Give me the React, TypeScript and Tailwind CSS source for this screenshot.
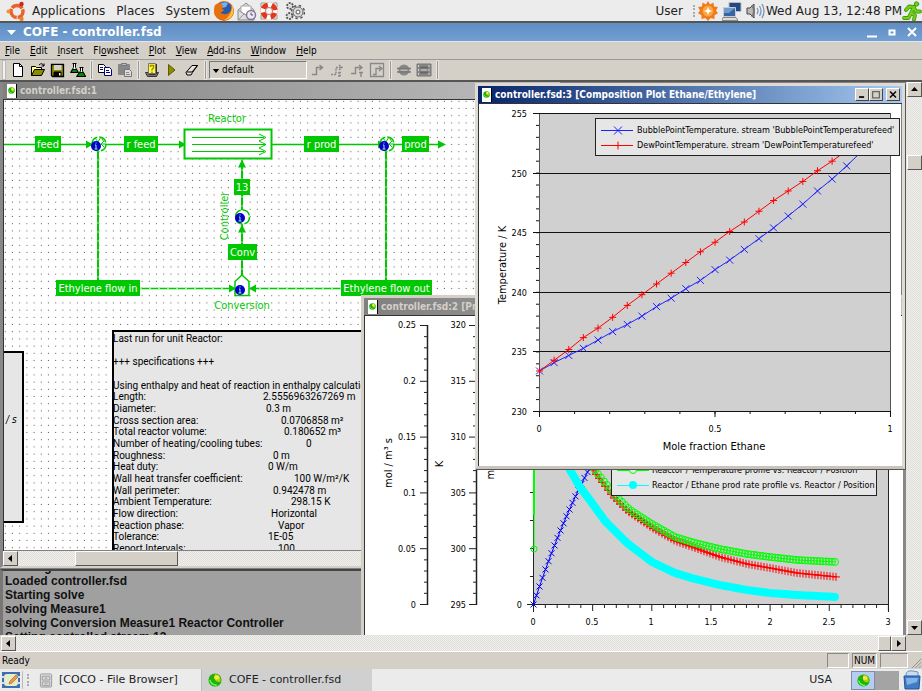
import type { ReactNode } from "react";

type Point = [number, number];

const MENUS: { label: string; key: number }[] = [
  { label: "File", key: 0 },
  { label: "Edit", key: 0 },
  { label: "Insert", key: 0 },
  { label: "Flowsheet", key: 2 },
  { label: "Plot", key: 0 },
  { label: "View", key: 0 },
  { label: "Add-ins", key: 0 },
  { label: "Window", key: 0 },
  { label: "Help", key: 0 },
];

const LOG_LINES = [
  "Loading controller.fsd",
  "Loaded controller.fsd",
  "Starting solve",
  "solving Measure1",
  "solving Conversion Measure1 Reactor Controller",
  "Setting controlled stream 13",
];

// label, value and the tab stop the value starts at
const REPORT: [string, string, number][] = [
  ["Last run for unit Reactor:", "", 0],
  ["", "", 0],
  ["+++ specifications +++", "", 0],
  ["", "", 0],
  ["Using enthalpy and heat of reaction in enthalpy calculations", "", 0],
  ["Length:", "2.5556963267269 m", 259],
  ["Diameter:", "0.3 m", 262],
  ["Cross section area:", "0.0706858 m²", 277],
  ["Total reactor volume:", "0.180652 m³", 280],
  ["Number of heating/cooling tubes:", "0", 302],
  ["Roughness:", "0 m", 269],
  ["Heat duty:", "0 W/m", 264],
  ["Wall heat transfer coefficient:", "100 W/m²/K", 290],
  ["Wall perimeter:", "0.942478 m", 269],
  ["Ambient Temperature:", "298.15 K", 287],
  ["Flow direction:", "Horizontal", 267],
  ["Reaction phase:", "Vapor", 274],
  ["Tolerance:", "1E-05", 264],
  ["Report Intervals:", "100", 274],
];

const DEW = [
  233.4, 234.3, 235.2, 236.2, 237, 237.9, 238.9, 239.8, 240.7, 241.6, 242.5,
  243.4, 244.2, 245.1, 245.9, 246.8, 247.7, 248.5, 249.3, 250.2, 251, 251.9,
];
const BUBBLE = [
  233.4, 234.1, 234.7, 235.3, 236, 236.7, 237.3, 238, 238.8, 239.5, 240.3, 241,
  241.9, 242.7, 243.6, 244.5, 245.4, 246.4, 247.4, 248.5, 249.5, 250.6, 251.8,
];

const RED_PROFILE: Point[] = [
  [222, 145], [230, 157], [248, 181], [262, 195], [287, 212], [310, 225], [330, 232],
  [355, 241], [382, 248], [405, 252], [432, 257], [472, 261],
];
const GREEN_PROFILE: Point[] = [
  [224, 145], [232, 157], [252, 181], [265, 194], [287, 208], [310, 221], [330, 227],
  [355, 233], [382, 238], [405, 241], [432, 244], [472, 246],
];
const CYAN_PROFILE: Point[] = [
  [200, 145], [205, 154], [215, 171], [227, 187], [240, 205], [262, 227], [287, 246],
  [310, 257], [330, 263], [355, 269], [382, 274], [405, 277], [432, 279], [472, 281],
];

function resample(points: Point[], step: number): Point[] {
  const out: Point[] = [];
  const last = points[points.length - 1][0];
  for (let x = points[0][0]; x <= last; x += step) {
    const i = Math.max(1, points.findIndex((p) => p[0] >= x));
    const [x0, y0] = points[i - 1];
    const [x1, y1] = points[i];
    out.push([x, y0 + ((y1 - y0) * (x - x0)) / (x1 - x0)]);
  }
  return out;
}

const toPath = (points: Point[]) => "M" + points.map((p) => p.join(" ")).join("L");

const plus = (points: Point[], r: number) =>
  points.map(([x, y]) => `M${x - r} ${y}h${2 * r}M${x} ${y - r}v${2 * r}`).join("");

const cross = (points: Point[], r: number) =>
  points
    .map(([x, y]) => `M${x - r} ${y - r}l${2 * r} ${2 * r}M${x - r} ${y + r}l${2 * r} ${-2 * r}`)
    .join("");

const ticks = (count: number) => Array.from({ length: count }, (_, i) => i);

/* ---------- window furniture ---------- */

function Orb({ className }: { className?: string }) {
  return (
    <svg viewBox="0 0 16 16" className={className} aria-hidden="true">
      <circle cx="8" cy="8" r="7.5" fill="#22b00c" />
      <path d="M8 1a7 7 0 0 1 6 9q-4 1-6-2-1-4 0-7z" fill="#a8d800" />
      <ellipse cx="10" cy="5" rx="3" ry="2.5" fill="#ffe63c" />
      <path d="M2 8q2 6 8 6" stroke="#6f6" strokeWidth="1.5" fill="none" />
    </svg>
  );
}

function DocIcon() {
  return (
    <span className="flex h-[14px] w-[10px] shrink-0 items-center justify-center border-r border-black bg-white">
      <Orb className="h-[7px] w-[7px]" />
    </span>
  );
}

function ScrollArrow({ dir, label }: { dir: "up" | "down" | "left" | "right"; label: string }) {
  const shapes = {
    up: "M4 9h7L7.5 5z",
    down: "M4 6h7L7.5 10z",
    left: "M9 4v7L5 7.5z",
    right: "M6 4v7l4-3.500z",
  };
  return (
    <button
      aria-label={label}
      className="h-[15px] w-[15px] shrink-0 border border-t-white border-l-white border-r-[#555] border-b-[#555] bg-[#d4d0c8]"
    >
      <svg viewBox="1 1 13 13" className="block h-full w-full" aria-hidden="true">
        <path d={shapes[dir]} fill="#000" />
      </svg>
    </button>
  );
}

const TRACK =
  "bg-[repeating-conic-gradient(#f1f0ee_0_25%,#dfddd8_0_50%)] bg-[length:2px_2px]";
const THUMB =
  "border border-t-white border-l-white border-r-[#555] border-b-[#555] bg-[#d4d0c8]";

function Caption({ title, active }: { title: string; active?: boolean }) {
  return (
    <div
      className={
        "flex h-[17px] shrink-0 items-center gap-[3px] pl-[4px] pr-[2px] font-['DejaVu_Sans_Condensed','Noto_Sans',sans-serif] text-[10px] font-bold " +
        (active
          ? "bg-linear-to-r from-[#0a246a] to-[#a6caf0] text-white"
          : "bg-linear-to-r from-[#808080] to-[#c0c0c0] text-[#d4d0c8]")
      }
    >
      <DocIcon />
      <span className="flex-1 overflow-hidden whitespace-nowrap">{title}</span>
      {active && (
        <span className="flex">
          <CaptionButton label="Minimize">
            <path d="M3 9.500h6" strokeWidth="2" />
          </CaptionButton>
          <CaptionButton label="Maximize">
            <path d="M2.500 3v7.500h8V3M2 3h9" strokeWidth="1.500" stroke="#666" />
          </CaptionButton>
          <span className="w-[3px]" />
          <CaptionButton label="Close">
            <path d="M3 3l7 7M10 3l-7 7" strokeWidth="1.700" />
          </CaptionButton>
        </span>
      )}
    </div>
  );
}

function CaptionButton({ label, children }: { label: string; children: ReactNode }) {
  return (
    <button
      aria-label={label}
      className="h-[13px] w-[14px] border border-t-white border-l-white border-r-[#444] border-b-[#444] bg-[#d4d0c8]"
    >
      <svg viewBox="0 0 13 13" className="block h-full w-full" fill="none" stroke="#000" aria-hidden="true">
        {children}
      </svg>
    </button>
  );
}

/* ---------- flowsheet ---------- */

const GREEN = "#00c800";

function StreamLabel({ x, y, w, text }: { x: number; y: number; w: number; text: string }) {
  return (
    <g>
      <rect x={x} y={y} width={w} height="16" fill={GREEN} />
      <text x={x + w / 2} y={y + 12} textAnchor="middle" fill="#fff">
        {text}
      </text>
    </g>
  );
}

function Info({ x, y }: { x: number; y: number }) {
  return (
    <g>
      <circle cx={x} cy={y} r="5" fill="#00c" />
      <path d={`M${x - 1} ${y - 1}h1v4M${x - 1.5} ${y + 3}h3M${x - 0.5} ${y - 3}h1`} stroke="#9cf0b0" fill="none" />
    </g>
  );
}

function Splitter({ x }: { x: number }) {
  return (
    <g>
      <circle cx={x + 1} cy="44" r="7" fill="#fff" stroke={GREEN} strokeWidth="1.500" strokeDasharray="9 2" />
      <path d={`M${x - 3} 38l3 4 3-5 3 5M${x + 8} 44h-5l3-3m-3 3l3 3`} stroke={GREEN} fill="none" />
      <Info x={x - 2} y={46} />
    </g>
  );
}

function Flowsheet() {
  return (
    <svg
      width="600"
      height="450"
      className="block font-['DejaVu_Sans_Condensed','Noto_Sans',sans-serif] text-[11px]"
      aria-label="Flowsheet"
    >
      <defs>
        <pattern id="grid" x="4.500" y="4.500" width="7.200" height="7.200" patternUnits="userSpaceOnUse">
          <rect x="3.500" y="3.500" width="1" height="1" fill="#555" />
        </pattern>
      </defs>
      <rect width="600" height="450" fill="#fff" />
      <rect width="600" height="450" fill="url(#grid)" />

      <g stroke={GREEN} strokeWidth="2" fill="none">
        <path d="M0 44.500H180M267 44.500H436" strokeWidth="1.500" />
        <path d="M94 50V188M382 50V188M238 60V182" />
        <path d="M94 50V188M382 50V188M238 60V182" stroke="#fff" strokeWidth="1" strokeDasharray="2 7" opacity=".6" />
        <path d="M136 188.500H230M246 188.500H340" strokeWidth="1.500" />
        <path d="M136 188.500H230M246 188.500H340" stroke="#fff" strokeWidth="1" strokeDasharray="2 7" opacity=".6" />
      </g>
      <path
        d="M82 40.500v8l7-4zM175 40.500v8l7-4zM374 40.500v8l7-4zM434 40.500v8l8-4zM234 67.500h8l-4-8zM234 132.500h8l-4-8zM225 184.500v8l7-4zM252 184.500v8l-7-4z"
        fill={GREEN}
      />
      <rect x="180.500" y="29.500" width="87" height="29" fill="#fff" stroke={GREEN} strokeWidth="2" />
      <path
        d="M188 37.500h72M188 44.500h74M188 51.500h72M255 34l7 3.500-7 3.500 7 3.500-7 3.500 7 3.500-7 3.500"
        stroke={GREEN}
        fill="none"
      />
      <Splitter x={94} />
      <Splitter x={382} />
      <circle cx="238.500" cy="117" r="7" fill="#fff" stroke={GREEN} strokeWidth="1.500" strokeDasharray="9 2" />
      <Info x={236} y={118} />
      <path d="M231 195.500V181.500l7-6.500 7 6.500v14z" fill="#fff" stroke={GREEN} strokeWidth="1.500" />
      <Info x={236} y={190} />

      <StreamLabel x={31} y={36} w={26} text="feed" />
      <StreamLabel x={120} y={36} w={34} text="r feed" />
      <StreamLabel x={300} y={36} w={35} text="r prod" />
      <StreamLabel x={398} y={36} w={27} text="prod" />
      <StreamLabel x={230} y={79} w={16} text="13" />
      <StreamLabel x={224} y={144} w={29} text="Conv" />
      <StreamLabel x={52} y={180} w={84} text="Ethylene flow in" />
      <StreamLabel x={337} y={180} w={91} text="Ethylene flow out" />
      <g fill={GREEN} textAnchor="middle">
        <text x="223" y="22">Reactor</text>
        <text x="238" y="209">Conversion</text>
        <text transform="translate(224 116) rotate(-90)">Controller</text>
      </g>

      <rect x="-5" y="252" width="24" height="170" fill="#e6e6e6" stroke="#000" strokeWidth="2" />
      <text x="2" y="323" className="text-[10px] italic">/ s</text>

      <rect x="109" y="231" width="480" height="400" fill="#e6e6e6" stroke="#000" strokeWidth="2" />
      <g className="font-['Roboto','Noto_Sans',sans-serif] text-[10px]">
        {REPORT.map(([label, value, x], i) => {
          const y = 242 + Math.round((i * 35) / 3);
          return (
            <g key={i}>
              <text x="109" y={y}>{label}</text>
              <text x={x} y={y}>{value}</text>
            </g>
          );
        })}
      </g>
    </svg>
  );
}

/* ---------- plots ---------- */

function ProfilePlot() {
  const blue: Point[] = ticks(20).map((i) => [
    168.5 + i * 3,
    288.5 - 350 * (1 - Math.exp(-0.0088 * i * 3)),
  ]);
  const red = resample(RED_PROFILE, 3);
  const green = resample(GREEN_PROFILE, 3);
  const cyan = resample(CYAN_PROFILE, 3);
  return (
    <svg
      width="536"
      height="320"
      className="block font-['DejaVu_Sans_Condensed','Noto_Sans',sans-serif] text-[9px]"
      aria-label="Reactor profiles"
    >
      <rect width="536" height="320" fill="#fff" />
      <rect x="168" y="9" width="355" height="280" fill="#d0d0d0" />
      <g stroke="#222">
        {[62, 111].map((x) => (
          <g key={x}>
            <path d={`M${x}.500 9v280`} strokeWidth="1.500" />
            {ticks(26).map((i) => (
              <path key={i} d={`M${x} ${9.5 + i * 11.16}h${i % 5 === 0 ? -7 : -3}`} />
            ))}
          </g>
        ))}
        <path d="M168.500 9v287M523.500 9v287M162 288.500h362" />
        {ticks(11).map((i) => (
          <path key={i} d={`M168 ${8.5 + i * 28}h-3`} />
        ))}
        {ticks(31).map((i) => (
          <path key={i} d={`M${168.5 + i * 11.83} 289v${i % 5 === 0 ? 6 : 3}`} />
        ))}
      </g>
      <g textAnchor="end">
        {["0.25", "0.2", "0.15", "0.1", "0.05", "0"].map((t, i) => (
          <text key={t} x="51" y={12 + i * 56}>{t}</text>
        ))}
        {["320", "315", "310", "305", "300", "295"].map((t, i) => (
          <text key={t} x="101" y={12 + i * 56}>{t}</text>
        ))}
        <text x="157" y="292">0</text>
      </g>
      <g textAnchor="middle">
        {["0", "0.5", "1", "1.5", "2", "2.5", "3"].map((t, i) => (
          <text key={t} x={168 + Math.round(i * 59.2)} y="309">{t}</text>
        ))}
        <g className="text-[11px]">
          <text transform="translate(27 147) rotate(-90)">mol / m³ s</text>
          <text transform="translate(78 148) rotate(-90)">K</text>
          <text transform="translate(129 147) rotate(-90)">mol / s</text>
        </g>
      </g>
      <g fill="none">
        <path d="M169 9V199" stroke="#0f0" strokeWidth="2" />
        <path d="M169 199V233" stroke="#0f0" />
        <circle cx="169" cy="233" r="3" stroke="#0f0" />
        <path d={toPath(blue) + cross(blue, 3)} stroke="#00f" />
        <path d={toPath(green)} stroke="#0f0" />
        <path d={toPath(red) + plus(red, 4)} stroke="#f00" />
        {green.map(([x, y]) => (
          <circle key={x} cx={x} cy={y} r="3.500" stroke="#0f0" />
        ))}
        <path d={toPath(cyan)} stroke="#0ff" strokeWidth="8" strokeLinecap="round" strokeLinejoin="round" />
      </g>
      <rect x="246.500" y="100.500" width="265" height="79" fill="#e6e6e6" stroke="#222" />
      <path d="M252 154.500h32" stroke="#0f0" />
      <circle cx="268" cy="154" r="3.500" fill="#e6e6e6" stroke="#0f0" />
      <path d="M252 169.500h32" stroke="#0ff" />
      <circle cx="268" cy="169" r="4" fill="#0ff" />
      <text x="287" y="157">Reactor / Temperature profile vs. Reactor / Position</text>
      <text x="287" y="172">Reactor / Ethane prod rate profile vs. Reactor / Position</text>
    </svg>
  );
}

function CompositionPlot() {
  const place = (values: number[]): Point[] =>
    values.map((t, i) => [60.5 + i * 14.63, 307.5 - (t - 230) * 11.92]);
  const dew = place(DEW);
  const bubble = place(BUBBLE);
  return (
    <svg
      width="422"
      height="362"
      className="block font-['DejaVu_Sans_Condensed','Noto_Sans',sans-serif] text-[9px]"
      aria-label="Composition plot"
    >
      <rect width="422" height="362" fill="#fff" />
      <rect x="60.500" y="9.500" width="351" height="298" fill="#d0d0d0" stroke="#555" />
      <g stroke="#111">
        {ticks(6).map((i) => (
          <path key={i} d={`M54 ${Math.round(9 + i * 59.6)}.500H411`} />
        ))}
        {ticks(26).map((i) => (
          <path key={i} d={`M60 ${9.5 + i * 11.92}h-3`} />
        ))}
        <path d="M60.500 307v6M236 307v6M411.500 307v6" />
        {ticks(11).map((i) => (
          <path key={i} d={`M${60.5 + i * 35.1} 307v3`} />
        ))}
      </g>
      <g textAnchor="end">
        {["255", "250", "245", "240", "235", "230"].map((t, i) => (
          <text key={t} x="48" y={Math.round(13 + i * 59.6)}>{t}</text>
        ))}
      </g>
      <g textAnchor="middle">
        <text x="60" y="328">0</text>
        <text x="236" y="328">0.5</text>
        <text x="411" y="328">1</text>
        <g className="text-[11px]">
          <text x="235" y="346">Mole fraction Ethane</text>
          <text transform="translate(27 161) rotate(-90)">Temperature / K</text>
        </g>
      </g>
      <g fill="none">
        <path d={toPath([...bubble, [397, 36]]) + cross(bubble, 3.5)} stroke="#22f" />
        <path d={toPath([...dew, [382, 38]]) + plus(dew, 3.5)} stroke="#f00" />
      </g>
      <rect x="116.500" y="14.500" width="304" height="37" fill="#e6e6e6" stroke="#222" />
      <path d={"M122 26.500h32" + cross([[139, 26.5]], 4)} stroke="#22f" />
      <path d={"M122 41.500h32" + plus([[139, 41.5]], 4)} stroke="#f00" />
      <text x="158" y="29">BubblePointTemperature. stream 'BubblePointTemperaturefeed'</text>
      <text x="158" y="44">DewPointTemperature. stream 'DewPointTemperaturefeed'</text>
    </svg>
  );
}

/* ---------- toolbar ---------- */

function ToolButton({ label, disabled, children }: { label: string; disabled?: boolean; children: ReactNode }) {
  return (
    <button aria-label={label} disabled={disabled} className="flex w-5 shrink-0 items-center justify-center">
      <svg viewBox="0 0 16 16" className="h-4 w-4" fill="none" stroke="#000" aria-hidden="true">
        {children}
      </svg>
    </button>
  );
}

function Separator() {
  return <span className="mx-[3px] h-[18px] w-px shrink-0 bg-[#999] outline outline-[#e8e6e0]" />;
}

function ToolBar() {
  return (
    <div className="flex h-[21px] shrink-0 items-center border-t border-[#999] bg-[#d4d0c8] pl-[3px]">
      <span className="mr-[3px] h-[18px] w-[2px] bg-[#f4f2ee] outline outline-[#bbb]" />
      <ToolButton label="New">
        <path d="M3.500 1.500h6l3 3v10h-9z" fill="#fff" />
        <path d="M9.500 1.500v3h3" />
      </ToolButton>
      <ToolButton label="Open">
        <path d="M1.500 13.500v-9h4l1 1h5v2" fill="#ffff80" />
        <path d="M1.500 13.500l3-6h10l-3 6z" fill="#8c8c00" />
        <path d="M9 3q3-3 5 1m0-2.500V4h-2.500" />
      </ToolButton>
      <ToolButton label="Save">
        <path d="M1.500 2.500h12v12h-11l-1-1z" fill="#8c8c00" strokeWidth="1.300" />
        <path d="M4 3h7.500v5H4z" fill="#d4d0c8" stroke="none" />
        <path d="M4 10h7v4H4z" fill="#000" />
        <path d="M9 11h1.500v2.500H9z" fill="#fff" stroke="none" />
      </ToolButton>
      <ToolButton label="Flasks">
        <path d="M2.500 1.500h4M3.500 1.500v4l-3 5h8l-3-5v-4" fill="#fff" />
        <path d="M2.500 7.500h4l1.500 3H1z" fill="#080" />
        <path d="M9.500 5.500h4M10.500 6v3l-4 5.500h9L12.500 9V6" fill="#fff" />
        <path d="M9.500 10.500h4l2 4H7z" fill="#080" />
      </ToolButton>
      <Separator />
      <ToolButton label="Copy">
        <path d="M1.500 2.500h5l2 2v6h-7z" fill="#fff" />
        <path d="M7.500 5.500h5l2 2v6h-7z" fill="#fff" stroke="#000080" />
        <path d="M3 5.500h3M3 7.500h3M9 8.500h3M9 10.500h4" stroke="#000080" />
      </ToolButton>
      <ToolButton label="Paste" disabled>
        <path d="M1.500 2.500h11v10h-11z" fill="#888" stroke="#888" />
        <path d="M4.500 1.500h5v2h-5z" fill="#bbb" stroke="#777" />
        <path d="M7.500 7.500h5l2 2v5h-7z" fill="#ddd" stroke="#777" />
        <path d="M9 10.500h3M9 12.500h4" stroke="#888" />
      </ToolButton>
      <Separator />
      <ToolButton label="Unit help">
        <path d="M1.500 10.500h3v2h7v-2h3l-2 4h-9z" fill="#777" stroke="#333" />
        <path d="M4.500 1.500h7v10h-7z" fill="#ffff30" stroke="#777" />
        <path d="M12.500 2v10" stroke="#333" />
        <path d="M6.500 5V3.500h3V6L8 7.500v1M8 9.500v1.500" stroke="#a80" strokeWidth="1.500" />
      </ToolButton>
      <ToolButton label="Solve">
        <path d="M4.500 2.500v11l6.500-5.500z" fill="#8c8c00" stroke="#5c5c00" />
      </ToolButton>
      <ToolButton label="Reset">
        <path d="M2 10.500l6-7h5.500l-5 7-1.500 2.500H3z" fill="#e4e2dc" />
        <path d="M2.500 10h5.500l5.500-6.500" />
      </ToolButton>
      <Separator />
      <div className="relative flex">
        <select
          aria-label="Style"
          className="h-[18px] w-[98px] appearance-none border border-t-[#777] border-l-[#777] border-r-white border-b-white bg-[#d4d0c8] pl-[12px] font-['DejaVu_Sans_Condensed','Noto_Sans',sans-serif] text-[10px] leading-4"
        >
          <option>default</option>
        </select>
        <svg viewBox="0 0 8 5" className="pointer-events-none absolute left-[3px] top-[8px] h-[4px] w-[8px]" aria-hidden="true">
          <path d="M0 0h8L4 5z" />
        </svg>
      </div>
      <ToolButton label="Route stream" disabled>
        <path d="M3 12.500h4.500v-7H13M10.500 3l3 2.500-3 2.500" stroke="#888" strokeWidth="1.500" />
      </ToolButton>
      <ToolButton label="Route energy stream" disabled>
        <path d="M2 12.500h5v-7h5M10 3l3 2.500L10 8M10 10.500h3M10 13.500h3M10 10v5" stroke="#888" strokeWidth="1.500" strokeDasharray="2 1" />
      </ToolButton>
      <ToolButton label="Route information stream" disabled>
        <path d="M2 11.500h4.500v-6H12M10 3l3 2.500L10 8M10 10.500h4M12 10v5" stroke="#888" strokeWidth="1.400" />
      </ToolButton>
      <ToolButton label="Route all" disabled>
        <path d="M1.500 1.500h13v13h-13zM4 12.500h3v-6h5M10 4l3 2.500L10 9" stroke="#888" strokeWidth="1.300" />
      </ToolButton>
      <Separator />
      <ToolButton label="Unit operation" disabled>
        <circle cx="8" cy="8" r="5.500" fill="#888" stroke="none" />
        <path d="M1 6.500h14M1 10h14" stroke="#777" strokeWidth="1.500" />
        <path d="M4.500 8.200h7" stroke="#d4d0c8" />
      </ToolButton>
      <ToolButton label="Unit table" disabled>
        <path d="M1 2h14v12H1z" fill="#888" stroke="#777" />
        <path d="M4 5.500h8M4 10.500h8" stroke="#666" strokeWidth="2" />
        <path d="M5 8h6" stroke="#d4d0c8" />
        <path d="M13 3v11M2.500 3v11" stroke="#d4d0c8" strokeDasharray="2 2" />
      </ToolButton>
      <Separator />
    </div>
  );
}

/* ---------- desktop panels ---------- */

function TopPanel() {
  return (
    <header className="flex h-[23px] shrink-0 items-center border-b-2 border-[#555] bg-[#ececec] pl-[6px] font-['DejaVu_Sans',sans-serif] text-[12px] text-[#222]">
      <svg viewBox="0 0 20 20" className="h-5 w-5" fill="none" aria-hidden="true">
        <circle cx="11" cy="10.500" r="6" stroke="#e8622a" strokeWidth="3.500" strokeDasharray="11.500 1" strokeDashoffset="3" />
        <circle cx="2.500" cy="10.500" r="2" fill="#f0902a" />
        <circle cx="15.500" cy="3" r="2.200" fill="#c8281e" />
        <circle cx="15.500" cy="18" r="2.200" fill="#f0802a" />
      </svg>
      <nav className="ml-[6px] flex gap-[11px]">
        <button>Applications</button>
        <button>Places</button>
        <button>System</button>
      </nav>
      <div className="ml-[3px] flex items-center gap-[2px]">
        <button aria-label="Web browser">
          <svg viewBox="0 0 22 22" className="block h-[22px] w-[22px]" aria-hidden="true">
            <circle cx="11" cy="11" r="10" fill="#e46c10" />
            <circle cx="11.500" cy="9.500" r="7.500" fill="#2a5aa8" />
            <path d="M6 5q4-4 9-2l-2 4-4 1z" fill="#6fb4ea" />
            <path d="M1.500 6q2-3 3.500-2 3-1 5 2l-1 3q2 0 2 1-2 3-4 2 3 4 9 1 4-4 2-9 4 5 2 10-4 7-11 6Q1 18 1 11z" fill="#e8700f" />
            <path d="M19 5q3 6 0 11-3 4-8 4 8-4 8-15z" fill="#fcc23c" />
          </svg>
        </button>
        <button aria-label="Mail">
          <svg viewBox="0 0 20 20" className="block h-5 w-5" fill="none" aria-hidden="true">
            <path d="M1 9l8-7 8 7v10H1z" fill="#ddd" stroke="#888" />
            <path d="M4 5h10v6l-5 3-5-3z" fill="#fff" stroke="#aaa" />
            <path d="M1 19l6-6M1 9l8 5 8-5" stroke="#999" />
            <circle cx="14" cy="14" r="4.500" fill="#eee8f4" stroke="#85759c" strokeWidth="1.500" />
            <path d="M14 11.500V14h2" stroke="#555" />
          </svg>
        </button>
        <button aria-label="Help">
          <svg viewBox="0 0 20 20" className="block h-5 w-5" fill="none" aria-hidden="true">
            <path d="M2 6V2h4M14 2h4v4M18 14v4h-4M6 18H2v-4" stroke="#999" />
            <circle cx="10" cy="10" r="6.200" stroke="#e0391c" strokeWidth="5" />
            <circle cx="10" cy="10" r="6.200" stroke="#fff" strokeWidth="5" strokeDasharray="4 5.740" strokeDashoffset="2" />
            <circle cx="10" cy="10" r="3.500" fill="#f4f4f4" stroke="#a33" strokeWidth=".6" />
          </svg>
        </button>
        <button aria-label="Settings" className="ml-1">
          <svg viewBox="0 0 20 20" className="block h-5 w-5" fill="none" stroke="#555" aria-hidden="true">
            <circle cx="13" cy="11" r="5" fill="#ddd" stroke="#666" />
            <circle cx="13" cy="11" r="6.500" strokeWidth="1.500" strokeDasharray="2.500 2.600" />
            <circle cx="13" cy="11" r="2" fill="#fff" />
            <circle cx="5" cy="5" r="3" strokeDasharray="2 1.100" strokeWidth="1.800" fill="#ddd" />
            <circle cx="4.500" cy="15" r="3" strokeDasharray="2 1.100" strokeWidth="1.800" fill="#ddd" />
          </svg>
        </button>
      </div>
      <span className="ml-auto">User</span>
      <span className="ml-[10px] h-3 border-l-2 border-dotted border-[#aaa]" />
      <svg viewBox="0 0 20 20" className="ml-[3px] h-5 w-5" aria-hidden="true">
        <path
          d="M10 0l2 3.500 3.500-2 .5 4 4 .5-2 3.500 2 3-3.500 1.500v4l-4-1L10 20l-2.500-3-4 1v-4L0 12.500l2-3L0 6l4-.5.5-4 3.500 2z"
          fill="#f07a18"
        />
        <circle cx="10" cy="10" r="5.500" fill="#fba640" />
        <path d="M10 6l1.200 2.800L14 10l-2.800 1.200L10 14l-1.200-2.800L6 10l2.800-1.200z" fill="#fff" />
      </svg>
      <svg viewBox="0 0 20 20" className="ml-1 h-5 w-5" aria-hidden="true">
        <path d="M7 1.500h12v9H7z" fill="#204a87" stroke="#bbb" />
        <path d="M1.500 6.500h12v9h-12z" fill="#3465a4" stroke="#ccc" />
        <path d="M2 7h11l-6 5H2z" fill="#6f9bd0" />
        <path d="M1 16.500h13l2 3H0z" fill="#ddd" stroke="#888" />
      </svg>
      <svg viewBox="0 0 20 20" className="ml-1 h-5 w-5" fill="none" aria-hidden="true">
        <path d="M1 7h3l4-4v14l-4-4H1z" fill="#bbb" stroke="#444" />
        <path d="M6 4q4 6 0 12" stroke="#777" strokeWidth="2" />
        <path d="M11 7q2 3 0 6M13.500 5q3 5 0 10M16 3q4 7 0 14" stroke="#7596c0" strokeWidth="1.300" />
      </svg>
      <span>Wed Aug 13, 12:48 PM</span>
      <button aria-label="Log out">
        <svg viewBox="0 0 20 20" className="block h-5 w-5" fill="none" stroke="#3f9b0b" strokeLinejoin="round" strokeLinecap="round" aria-hidden="true">
          <circle cx="14.500" cy="3" r="2.200" fill="#73d216" />
          <path d="M4 9l3-3.500 5 .5-3 6 4 2.500-1 4M8.500 13l-2 4H2M12 7l2 3.500h4" strokeWidth="3.800" />
          <path d="M4 9l3-3.500 5 .5-3 6 4 2.500-1 4M8.500 13l-2 4H2M12 7l2 3.500h4" stroke="#73d216" strokeWidth="2" />
        </svg>
      </button>
    </header>
  );
}

function TaskBar() {
  return (
    <footer className="flex h-[22px] shrink-0 items-center bg-[#ebebeb] font-['DejaVu_Sans',sans-serif] text-[11px] text-[#222]">
      <button aria-label="Show desktop" className="ml-[1px] border-r border-[#bbb] pr-px">
        <svg viewBox="0 0 20 18" className="block h-[18px] w-5" aria-hidden="true">
          <rect x="1" y="1" width="18" height="16" fill="#3d6fb0" />
          <rect x="3" y="3" width="14" height="12" rx="3" fill="#e4ecc8" />
          <path d="M1 6h3M16 6h3M1 12h3M16 12h3" stroke="#cde" strokeWidth="2" />
          <path d="M8 13l1-3 6-6 2 2-6 6z" fill="#f59a28" stroke="#955" strokeWidth=".6" />
        </svg>
      </button>
      <span className="mx-[4px] h-3 border-l-2 border-dotted border-[#aaa]" />
      <button className="flex h-full w-[169px] items-center gap-[6px] border-r border-[#bbb] pl-[6px]">
        <svg viewBox="0 0 14 16" className="h-[15px] w-[14px]" fill="#ddd" stroke="#999" aria-hidden="true">
          <rect x="1" y="1" width="12" height="14" rx="1" />
          <path d="M3 3.500h8v4H3zM3 9.500h8v4H3zM5.500 5.500h3M5.500 11.500h3" />
        </svg>
        [COCO - File Browser]
      </button>
      <button className="flex h-full w-[170px] items-center gap-[7px] bg-[#d0d0d0] pl-[6px]">
        <Orb className="h-[14px] w-[14px]" />
        COFE - controller.fsd
      </button>
      <span className="ml-auto mr-[19px]">USA</span>
      <button aria-label="Workspace 1" className="flex h-[19px] w-6 items-center justify-center border border-[#88a] bg-[#b4cfee]">
        <Orb className="h-[13px] w-[13px]" />
      </button>
      <button aria-label="Workspace 2" className="h-[19px] w-6 bg-[#a4a4a4]" />
      <button aria-label="Trash" className="ml-1 mr-px">
        <svg viewBox="0 0 18 20" className="block h-5 w-[18px]" aria-hidden="true">
          <path d="M3 5q0-5 7-4l5 1v5H3z" fill="#c9dcf2" stroke="#6a90c4" />
          <path d="M1 6h16l-1 13H2z" fill="#3f7cc8" stroke="#28558f" />
          <path d="M3 8h12l-1 4-10 3z" fill="#83b2e6" />
        </svg>
      </button>
    </footer>
  );
}

export default function App() {
  return (
    <div className="flex h-screen min-w-0 flex-col overflow-hidden bg-[#d4d0c8] text-black">
      <TopPanel />
      <div className="flex h-[19px] shrink-0 items-center border-b border-b-[#dfe6f0] bg-linear-to-b from-[#5f8ec4] to-[#739fd2] pl-[7px] pr-[5px] font-['DejaVu_Sans',sans-serif] text-[12px] font-bold text-white">
        <svg viewBox="0 0 9 5" className="mr-[7px] h-[5px] w-[9px]" fill="#fff" aria-hidden="true">
          <path d="M0 0h9L4.500 5z" />
        </svg>
        <h1 className="flex-1">COFE - controller.fsd</h1>
        <div className="flex gap-[10px]">
          {[
            ["Minimize", "M0 9.500h10"],
            ["Maximize", "M2.500 3.500h5v4h-5z"],
            ["Close", "M1 1l8 8M9 1l-8 8"],
          ].map(([label, d]) => (
            <button key={label} aria-label={label}>
              <svg viewBox="0 0 10 11" className="block h-[11px] w-[10px]" fill="none" stroke="#fff" strokeWidth="2" aria-hidden="true">
                <path d={d} />
              </svg>
            </button>
          ))}
        </div>
      </div>

      <nav className="flex h-[17px] shrink-0 items-center gap-[10px] pl-[5px] font-['DejaVu_Sans_Condensed','Noto_Sans',sans-serif] text-[10px]">
        {MENUS.map(({ label, key }) => (
          <button key={label}>
            {label.slice(0, key)}
            <u>{label[key]}</u>
            {label.slice(key + 1)}
          </button>
        ))}
      </nav>
      <ToolBar />

      <main className="flex min-h-0 flex-1 flex-col border-t-2 border-[#555]">
        <div className="flex min-h-0 flex-1">
          <div className="relative min-w-0 flex-1 overflow-hidden bg-[#808080]">
            <section className="absolute left-0 top-0 flex h-[486px] w-[560px] flex-col border-b-2 border-l-[3px] border-[#d4d0c8] border-l-[#888]">
              <Caption title="controller.fsd:1" />
              <div className="min-h-0 flex-1 overflow-hidden border-l border-t border-[#333]">
                <Flowsheet />
              </div>
              <div className={"flex h-[15px] shrink-0 " + TRACK}>
                <ScrollArrow dir="left" label="Scroll flowsheet left" />
                <span className={"ml-[57px] w-[103px] " + THUMB} />
              </div>
            </section>

            <section className="absolute bottom-0 left-0 top-[487px] flex w-[361px] flex-col justify-end overflow-hidden border-l-[3px] border-t-2 border-[#444] border-l-[#777] bg-[#a0a0a0]">
              <pre className="-mb-[9px] pl-[2px] font-['Liberation_Sans',sans-serif] text-[12px] font-bold leading-[14px] text-[#111]">
                {LOG_LINES.join("\n")}
              </pre>
            </section>

            <section className="absolute left-[361px] top-[213px] flex h-[343px] w-[545px] flex-col border-[3px] border-b-0 border-[#d4d0c8] border-r-[#888] bg-white">
              <Caption title="controller.fsd:2 [Profile Plot Reactor]" />
              <div className="flex-1 border-l border-t border-[#333]">
                <ProfilePlot />
              </div>
            </section>

            <section className="absolute left-[475px] top-[1px] flex w-[430px] flex-col border-[3px] border-[#dedbd4] border-b-[#c8c4bc] shadow-[1px_1px_0_#555]">
              <Caption title="controller.fsd:3 [Composition Plot Ethane/Ethylene]" active />
              <div className="overflow-hidden border-l border-t border-[#333]">
                <CompositionPlot />
              </div>
            </section>
          </div>
          <div className={"flex w-4 shrink-0 flex-col items-center " + TRACK}>
            <ScrollArrow dir="up" label="Scroll up" />
            <span className={"mt-[58px] h-[15px] w-[15px] " + THUMB} />
            <span className="flex-1" />
            <ScrollArrow dir="down" label="Scroll down" />
          </div>
        </div>
        <div className="flex h-[17px] shrink-0 border-b border-white bg-[#d4d0c8] pl-px pr-4">
          <div className={"flex flex-1 items-center " + TRACK}>
            <ScrollArrow dir="left" label="Scroll left" />
            <span className="flex-1" />
            <span className={"h-[15px] w-[13px] " + THUMB} />
            <ScrollArrow dir="right" label="Scroll right" />
          </div>
        </div>
      </main>

      <div className="flex h-[17px] shrink-0 items-center gap-[3px] pl-[2px] font-['DejaVu_Sans_Condensed','Noto_Sans',sans-serif] text-[10px]">
        <span className="flex-1">Ready</span>
        <span className="h-[15px] w-[22px] border border-t-[#888] border-l-[#888] border-r-white border-b-white" />
        <span className="h-[15px] border border-t-[#888] border-l-[#888] border-r-white border-b-white px-px leading-[14px]">NUM</span>
        <span className="h-[15px] w-[28px] border border-t-[#888] border-l-[#888] border-r-white border-b-white" />
        <svg viewBox="0 0 13 13" className="h-[11px] w-[11px] self-end" stroke="#888" aria-hidden="true">
          <path d="M1 12L12 1M5 12l7-7M9 12l3-3" />
        </svg>
      </div>
      <TaskBar />
    </div>
  );
}
